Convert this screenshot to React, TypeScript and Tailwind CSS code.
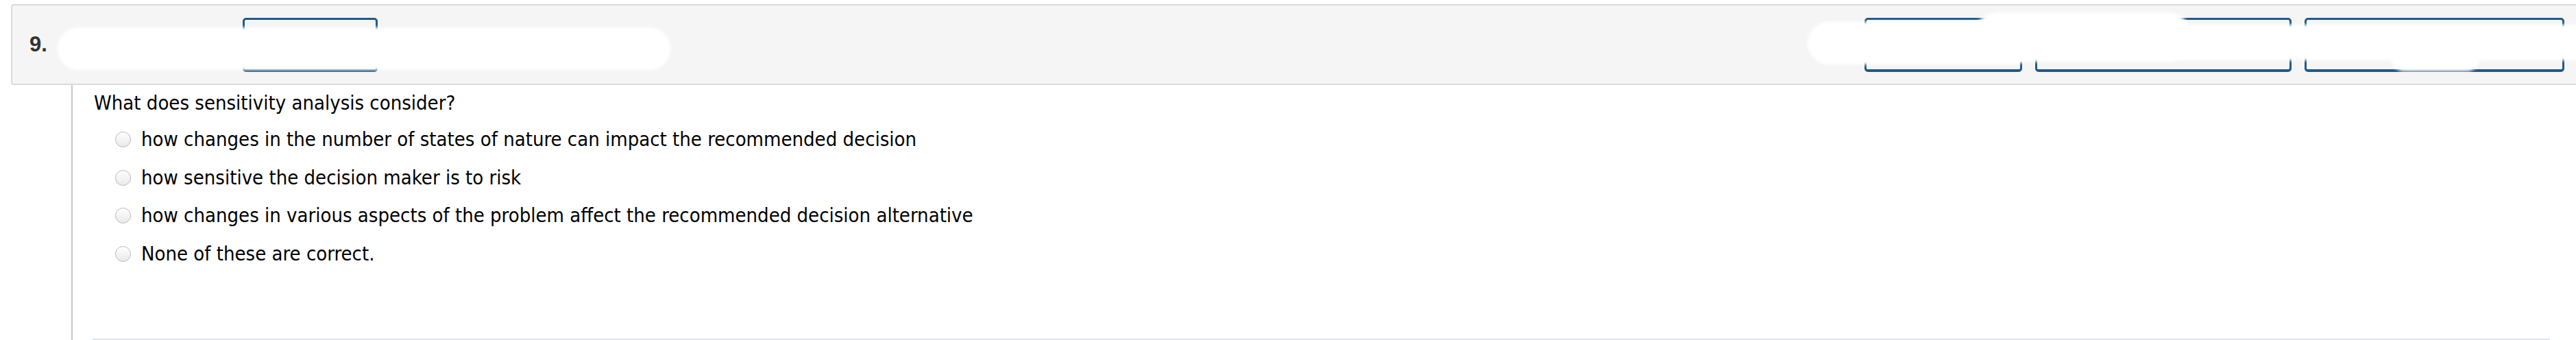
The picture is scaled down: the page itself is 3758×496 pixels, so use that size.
const OPTIONS = [
  'how changes in the number of states of nature can impact the recommended decision',
  'how sensitive the decision maker is to risk',
  'how changes in various aspects of the problem affect the recommended decision alternative',
  'None of these are correct.',
];

function Radio() {
  return (
    <span className="h-[23px] w-[23px] shrink-0 rounded-full border border-[#b9b9b9] bg-gradient-to-b from-white to-[#e9e9e9]" />
  );
}

export default function App() {
  return (
    <div className="h-[496px] w-[3758px] overflow-hidden bg-white pt-[6px] pl-[16px] font-['DejaVu_Sans_Condensed','DejaVu_Sans',sans-serif] text-black">
      {/* question header */}
      <div className="relative flex h-[118px] w-[3746px] items-center rounded-[4px] border-2 border-[#dadada] bg-[#f5f5f5] pl-[25px] pr-[19px]">
        <span className="font-['Liberation_Sans',Arial,sans-serif] text-[31px] font-bold text-[#333]">9.</span>
        <div className="ml-[285px] h-[79px] w-[197px] rounded-[5px] border-[3px] border-b-4 border-[#215a8b]" />
        <div className="ml-auto flex gap-[19px]">
          <div className="h-[79px] w-[230px] rounded-[5px] border-[3px] border-b-4 border-[#215a8b]" />
          <div className="h-[79px] w-[374px] rounded-[5px] border-[3px] border-b-4 border-[#215a8b]" />
          <div className="h-[79px] w-[379px] rounded-[5px] border-[3px] border-b-4 border-[#215a8b]" />
        </div>

        {/* redaction marks */}
        <div className="absolute left-[66px] top-[32px] h-[62px] w-[894px] rounded-[30px] bg-white blur-[2px]" />
        <div className="absolute left-[2619px] top-[24px] h-[62px] w-[330px] rounded-[31px] bg-white blur-[2px]" />
        <div className="absolute left-[2860px] top-[10px] h-[72px] w-[320px] rounded-[36px] bg-white blur-[2px]" />
        <div className="absolute left-[3100px] top-[28px] h-[52px] w-[680px] rounded-[26px] bg-white blur-[2px]" />
        <div className="absolute left-[3470px] top-[56px] h-[40px] w-[130px] rounded-[20px] bg-white blur-[2px]" />
      </div>

      {/* question body */}
      <div className="ml-[88px] flex h-[372px] flex-col border-l-2 border-[#c8c8c8] pl-[31px] pt-[9px]">
        <div className="flex h-[36px] items-center text-[29px]">What does sensitivity analysis consider?</div>
        <div className="mt-[7px] flex flex-col pl-[31px]">
          {OPTIONS.map(option => (
            <label key={option} className="flex h-[55.5px] items-center gap-[15px] text-[29px]">
              <Radio />
              <span>{option}</span>
            </label>
          ))}
        </div>
        <div className="mt-auto ml-[-2px] h-[2px] w-[3585px] bg-[#dde3ea]" />
      </div>
    </div>
  );
}
